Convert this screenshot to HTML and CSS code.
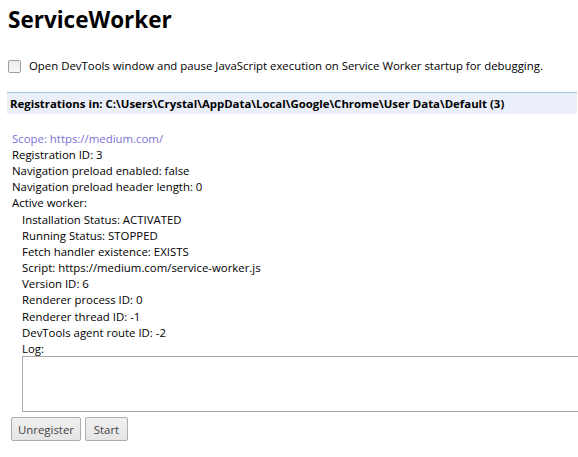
FILE: index.html
```html
<!DOCTYPE html>
<html>
<head>
<meta charset="utf-8">
<link rel="stylesheet" href="styles.css">
</head>
<body>
<div class="page">
  <h1 class="title">ServiceWorker</h1>
  <label class="debug-row">
    <span class="checkbox"></span>
    <span class="debug-text">Open DevTools window and pause JavaScript execution on Service Worker startup for debugging.</span>
  </label>
  <div class="reg-header">Registrations in: C:\Users\Crystal\AppData\Local\Google\Chrome\User Data\Default (3)</div>
  <div class="registration">
    <div class="scope">Scope: https://medium.com/</div>
    <div class="line">Registration ID: 3</div>
    <div class="line">Navigation preload enabled: false</div>
    <div class="line">Navigation preload header length: 0</div>
    <div class="line">Active worker:</div>
    <div class="worker">
      <div class="line">Installation Status: ACTIVATED</div>
      <div class="line">Running Status: STOPPED</div>
      <div class="line">Fetch handler existence: EXISTS</div>
      <div class="line">Script: https://medium.com/service-worker.js</div>
      <div class="line">Version ID: 6</div>
      <div class="line">Renderer process ID: 0</div>
      <div class="line">Renderer thread ID: -1</div>
      <div class="line">DevTools agent route ID: -2</div>
      <div class="line">Log:</div>
      <div class="log"></div>
    </div>
    <div class="actions">
      <button class="btn">Unregister</button>
      <button class="btn">Start</button>
    </div>
  </div>
</div>
</body>
</html>
```
FILE: styles.css
```css
html, body {
  margin: 0;
  padding: 0;
  background: #fff;
}
body {
  font-family: "Segoe UI", "Open Sans", "Noto Sans", sans-serif;
  font-size: 11.4px;
  color: #000;
}
.page {
  padding: 0 0 0 8px;
}
.title {
  font-size: 22.5px;
  font-weight: bold;
  line-height: 28px;
  margin: 6px 0 0 0;
}
.debug-row {
  display: flex;
  align-items: center;
  margin-top: 24px;
  height: 16px;
}
.checkbox {
  width: 11px;
  height: 11px;
  border: 1px solid #a0a0a0;
  border-radius: 2px;
  background: linear-gradient(#ececec, #f8f8f8);
  margin-right: 8px;
}
.debug-text {
  line-height: 16px;
}
.reg-header {
  margin-top: 18px;
  margin-left: -1px;
  margin-right: 1px;
  border-top: 1px solid #a7c4ec;
  background: #ebeff9;
  font-weight: bold;
  line-height: 21px;
  padding-left: 3px;
}
.registration {
  padding: 17px 0 0 4px;
}
.scope {
  color: #7b6fd9;
  line-height: 16px;
}
.line {
  line-height: 16.15px;
  white-space: nowrap;
}
.worker {
  padding-left: 10px;
}
.log {
  height: 54px;
  border: 1px solid #a9a9a9;
  margin-top: -1px;
  margin-right: -20px;
}
.actions {
  display: flex;
  gap: 4px;
  margin-top: 5px;
  margin-left: -1px;
}
.btn {
  font-family: inherit;
  font-size: 11.4px;
  color: #444;
  height: 24px;
  min-width: 43px;
  padding: 0 6px;
  border: 1px solid #acacac;
  border-radius: 2px;
  background: linear-gradient(#f0f0f0, #e5e5e5);
}
```
